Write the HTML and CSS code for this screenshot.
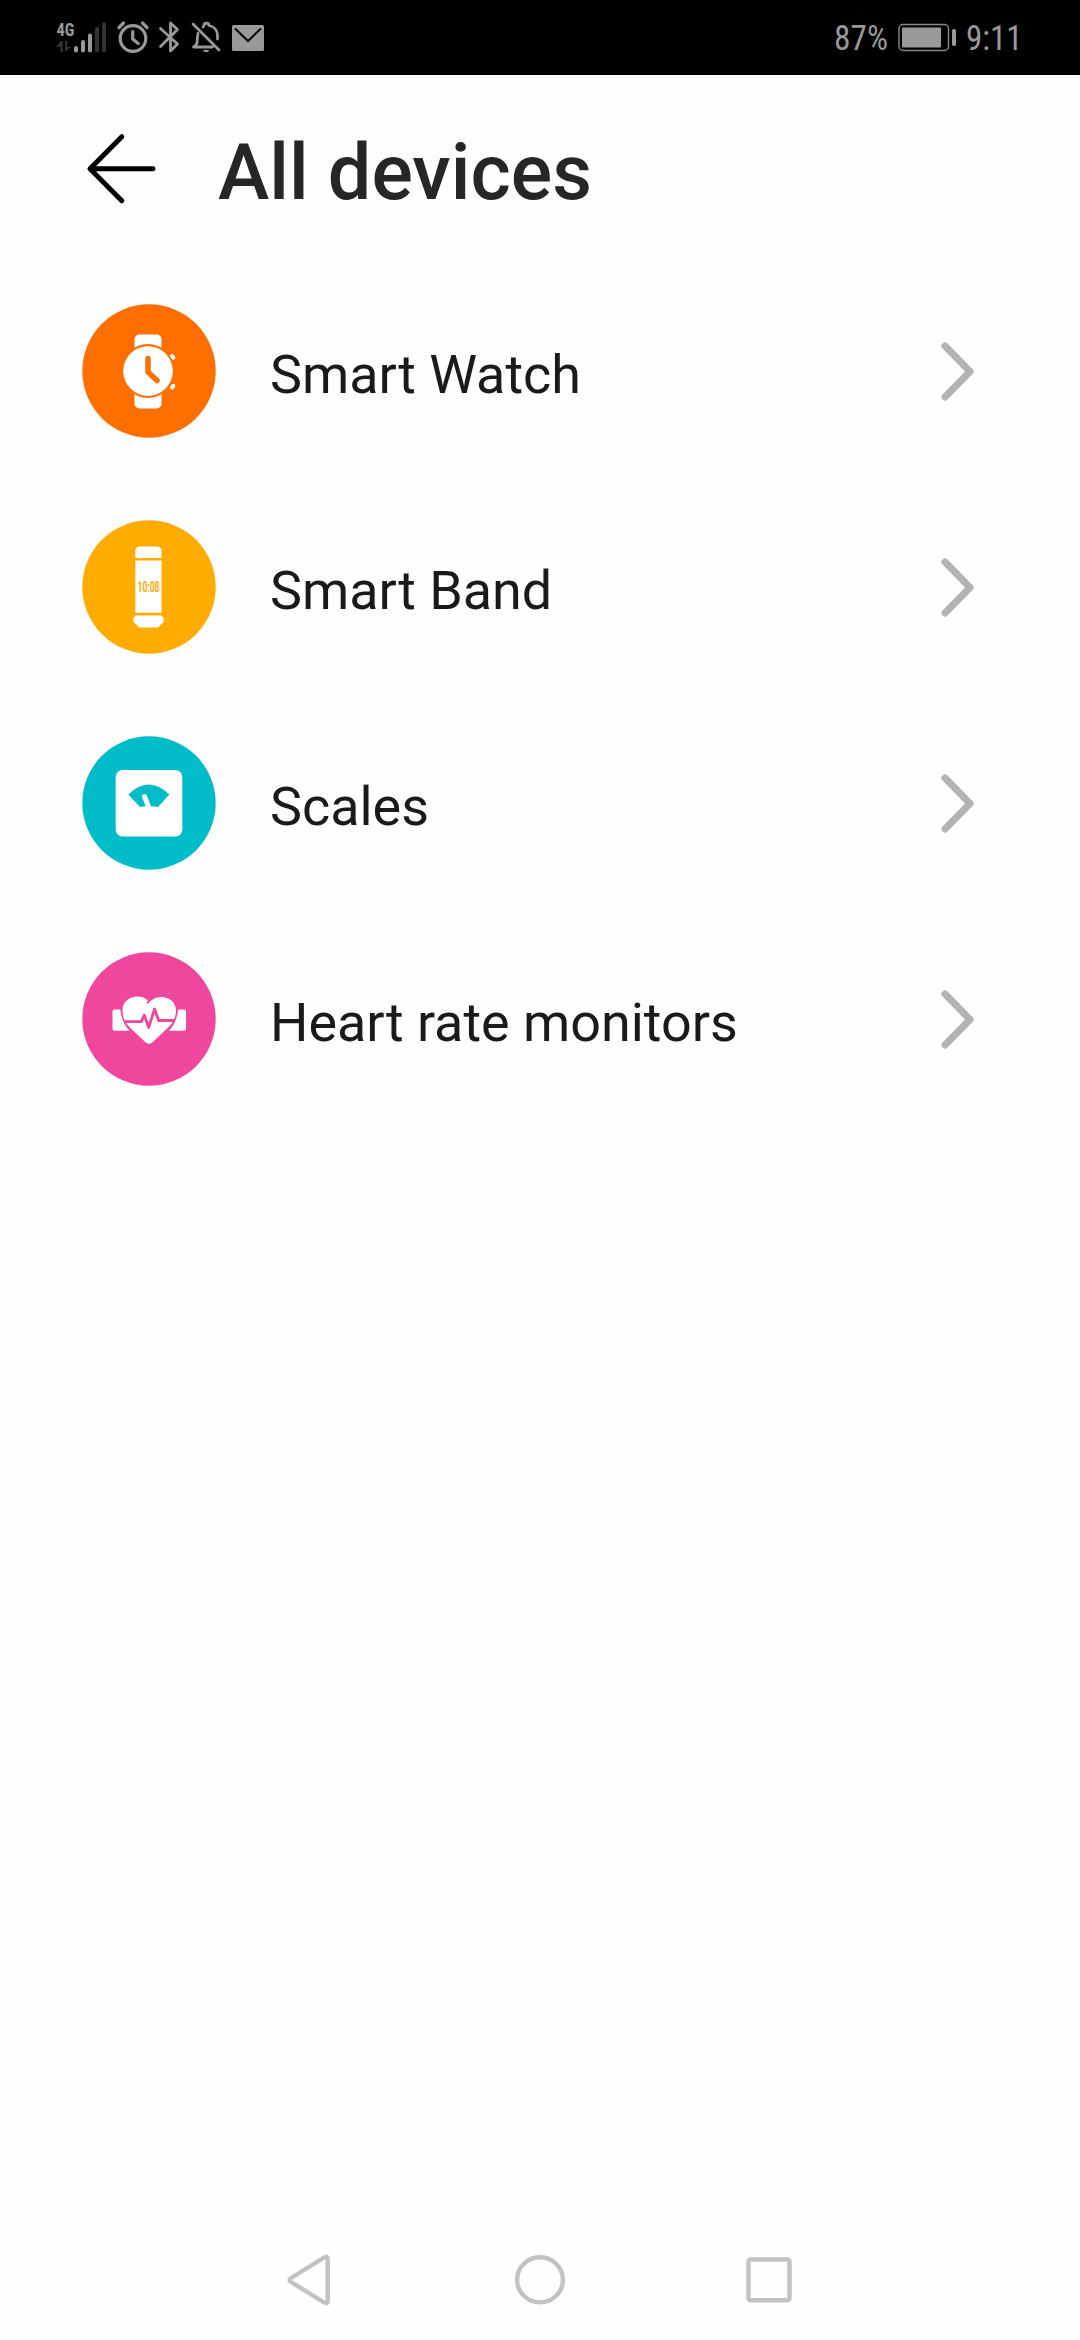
FILE: index.html
```html
<!DOCTYPE html>
<html lang="en">
<head>
<meta charset="utf-8">
<title>All devices</title>
<link rel="stylesheet" href="styles.css">
</head>
<body>
<div class="screen">
  <div class="status-bar">
    <svg class="status-left" viewBox="0 0 240 75" width="240" height="75">
      <text class="net" x="16.5" y="35.5" textLength="18" lengthAdjust="spacingAndGlyphs">4G</text>
      <g class="dim">
        <path d="M20.500 41h2.200v11h-2.200V47H16.500zM25 52V41h2.200v6h4z"/>
        <rect x="55" y="27" width="4" height="25.500" rx="2"/>
        <rect x="62" y="22" width="4" height="30.500" rx="2"/>
      </g>
      <g class="lit">
        <rect x="34" y="46" width="4" height="6.500" rx="2"/>
        <rect x="41" y="40" width="4" height="12.500" rx="2"/>
        <rect x="48" y="33.500" width="4" height="19" rx="2"/>
        <rect x="192" y="25" width="32" height="26" rx="1.500"/>
      </g>
      <path class="cut" d="M195 28.500 208 41l13-12.500"/>
      <g class="line">
        <circle cx="93" cy="38.500" r="12.800"/>
        <path d="M92.700 31.500V39l5.500 4.500M79 27.500l4.500-4.500M102.500 23l4.500 4.500"/>
      </g>
      <path class="line thin" d="M120.500 28.500 137.500 44 130.500 51V23l7 6.500-17 17"/>
      <g class="line thin">
        <path d="M153 24l26 26M158 33.500c-1.500 9 .500 10-4.500 13.500h19M163 27l1-1.500c0-3 5-3 5 0 5 1 8.500 5 8.500 10V39"/>
      </g>
      <path class="lit" d="M162.500 50h7q-3.500 4.500-7 0z"/>
    </svg>
    <svg class="status-right" viewBox="0 0 240 75" width="240" height="75">
      <text class="clock" x="24" y="50" textLength="54" lengthAdjust="spacingAndGlyphs">87%</text>
      <rect class="battery" x="89" y="24.500" width="49.500" height="26" rx="4"/>
      <rect class="lit" x="92" y="27.500" width="39" height="20" rx="1"/>
      <rect class="lit" x="142" y="29" width="4" height="17" rx="1.800"/>
      <text class="clock" x="156" y="50" textLength="56.500" lengthAdjust="spacingAndGlyphs">9:11</text>
    </svg>
  </div>

  <header class="title-bar">
    <svg class="back" viewBox="0 0 72 72" width="72" height="72"><path d="M37.800 3.700 6 35.700l31.800 32M7 35.700h61.900"/></svg>
    <h1>All devices</h1>
  </header>

  <ul class="devices">
    <li class="device">
      <svg class="icon watch" viewBox="0 0 134 134" width="134" height="134">
        <circle class="disc" cx="67" cy="67" r="66.700"/>
        <rect class="w" x="52.500" y="30.500" width="27" height="74" rx="5"/>
        <circle class="disc" cx="66" cy="67" r="27"/>
        <circle class="w" cx="66" cy="67" r="24.800"/>
        <path class="hand" d="M66 54.500V68l9 8.500"/>
        <path class="button" d="M90 52l1.400 1.700M90 83.500l1.400-1.700"/>
      </svg>
      <span class="name">Smart Watch</span>
      <svg class="chevron" viewBox="0 0 34 60" width="34" height="60"><path d="M4 5 29 30.500 4 56"/></svg>
    </li>
    <li class="device">
      <svg class="icon band" viewBox="0 0 134 134" width="134" height="134">
        <circle class="disc" cx="67" cy="67" r="66.700"/>
        <path class="w" d="M53.300 38v-7q0-4.500 5-4.500h16.200q5 0 5 4.500v7zM53.300 40.500h26.200v52.300H53.300zM53.300 95.500h26.200l2.200 2.500v4l-3 2.500q-1.500 3-4 3H58.500q-2.500 0-4-3l-3-2.500v-4z"/>
        <text class="time" x="55.500" y="72" textLength="22" lengthAdjust="spacingAndGlyphs">10:08</text>
      </svg>
      <span class="name">Smart Band</span>
      <svg class="chevron" viewBox="0 0 34 60" width="34" height="60"><path d="M4 5 29 30.500 4 56"/></svg>
    </li>
    <li class="device">
      <svg class="icon scales" viewBox="0 0 134 134" width="134" height="134">
        <circle class="disc" cx="67" cy="67" r="66.700"/>
        <rect class="w" x="33.700" y="34" width="66.600" height="66.600" rx="7"/>
        <path class="disc" d="M46.300 58.500q20.500-20 41 0L76 71l-18 0z"/>
        <path class="w" d="M56 71.300q10-2.300 22 0v2H56z"/>
        <path class="needle" d="M62.500 60.500l4 10"/>
      </svg>
      <span class="name">Scales</span>
      <svg class="chevron" viewBox="0 0 34 60" width="34" height="60"><path d="M4 5 29 30.500 4 56"/></svg>
    </li>
    <li class="device">
      <svg class="icon heart" viewBox="0 0 134 134" width="134" height="134">
        <circle class="disc" cx="67" cy="67" r="66.700"/>
        <path class="w" d="M32.500 57.500h5.800q1.500 13.500 9.400 21.300H32.500q-2 0-2-2V59.500q0-2 2-2zM102 57.500h-5.800q-1.500 13.500-9.400 21.300H102q2 0 2-2V59.500q0-2-2-2z"/>
        <path class="w" d="M65.500 48c-9-7.500-25.500-2-25 10.500 0 9 4 14 10 19.500l13.500 12.700q3 2 6 0L83.500 78c6-5.500 10.500-10.500 10.500-19.500 0-13.500-19-18.500-27.500-7l-3-.500 2.500-1.500z"/>
        <path class="pulse" d="M42 69.600h17.300l3-6.600 4.300 12.500 6-18.500 4 11.500h15.500"/>
      </svg>
      <span class="name">Heart rate monitors</span>
      <svg class="chevron" viewBox="0 0 34 60" width="34" height="60"><path d="M4 5 29 30.500 4 56"/></svg>
    </li>
  </ul>

  <nav class="nav-bar">
    <svg viewBox="0 0 60 60" width="60" height="60"><path d="M43 7.600Q46.700 5.400 46.700 9v42q0 3.600-3.700 1.400L10 32q-3-2 0-4z"/></svg>
    <svg viewBox="0 0 60 60" width="60" height="60"><ellipse cx="30" cy="29.800" rx="22.900" ry="22.600"/></svg>
    <svg viewBox="0 0 60 60" width="60" height="60"><rect x="9.500" y="9.500" width="41" height="40.800" rx="2"/></svg>
  </nav>
</div>
</body>
</html>
```
FILE: styles.css
```css
* { box-sizing: border-box; }

body {
  margin: 0;
  background: #fefefe;
  font-family: Roboto, "Liberation Sans", sans-serif;
}

svg { display: block; flex: none; }

.screen {
  width: 1080px;
  height: 2340px;
  display: flex;
  flex-direction: column;
}

.status-bar {
  height: 75px;
  flex: none;
  padding: 0 30px 0 40px;
  display: flex;
  justify-content: space-between;
  background: #000;
}
.status-bar text { fill: #999; font-family: "Roboto Condensed", Roboto, sans-serif; }
.net { font-size: 18.5px; font-weight: 700; }
.clock { font-size: 34.5px; }
.lit { fill: #999; }
.dim { fill: #333; }
.line { fill: none; stroke: #999; stroke-width: 3.2; stroke-linecap: round; stroke-linejoin: round; }
.thin, .thin path { stroke-width: 2.8; }
.cut { fill: none; stroke: #000; stroke-width: 2; }
.battery { fill: none; stroke: #888; stroke-width: 1.4; }

.title-bar {
  height: 188px;
  flex: none;
  padding: 0 84px;
  display: flex;
  align-items: center;
}
.back { fill: none; stroke: #000; stroke-width: 5; stroke-linecap: round; stroke-linejoin: round; }
h1 {
  margin: 7px 0 0 62px;
  font-size: 77.3px;
  line-height: 92px;
  font-weight: 500;
  color: #262626;
  white-space: nowrap;
}

.devices { margin: 0; padding: 0; list-style: none; flex: 1; }
.device {
  height: 216px;
  padding: 0 105px 0 82px;
  display: flex;
  align-items: center;
}
.name { flex: 1; margin: 7px 0 0 54px; font-size: 53.9px; line-height: 64px; color: #1a1a1a; white-space: nowrap; }
.chevron { fill: none; stroke: #b3b3b3; stroke-width: 7; stroke-linecap: round; stroke-linejoin: round; }

.watch { --tone: #ff6f00; }
.band { --tone: #ffab00; }
.scales { --tone: #00bcc9; }
.heart { --tone: #ef479d; }
.disc { fill: var(--tone); }
.w { fill: #fff; }
.hand { fill: none; stroke: var(--tone); stroke-width: 5.5; stroke-linecap: round; stroke-linejoin: round; }
.button { stroke: #fff; stroke-width: 4; stroke-linecap: round; }
.time { fill: var(--tone); font-size: 14px; font-weight: 700; }
.needle { stroke: #fff; stroke-width: 5; stroke-linecap: round; }
.pulse { fill: none; stroke: var(--tone); stroke-width: 2.8; stroke-linejoin: round; }

.nav-bar {
  height: 120px;
  flex: none;
  padding: 0 281px;
  display: flex;
  align-items: center;
  justify-content: space-between;
  fill: none;
  stroke: #c2c2c2;
  stroke-width: 4.4;
}
```
